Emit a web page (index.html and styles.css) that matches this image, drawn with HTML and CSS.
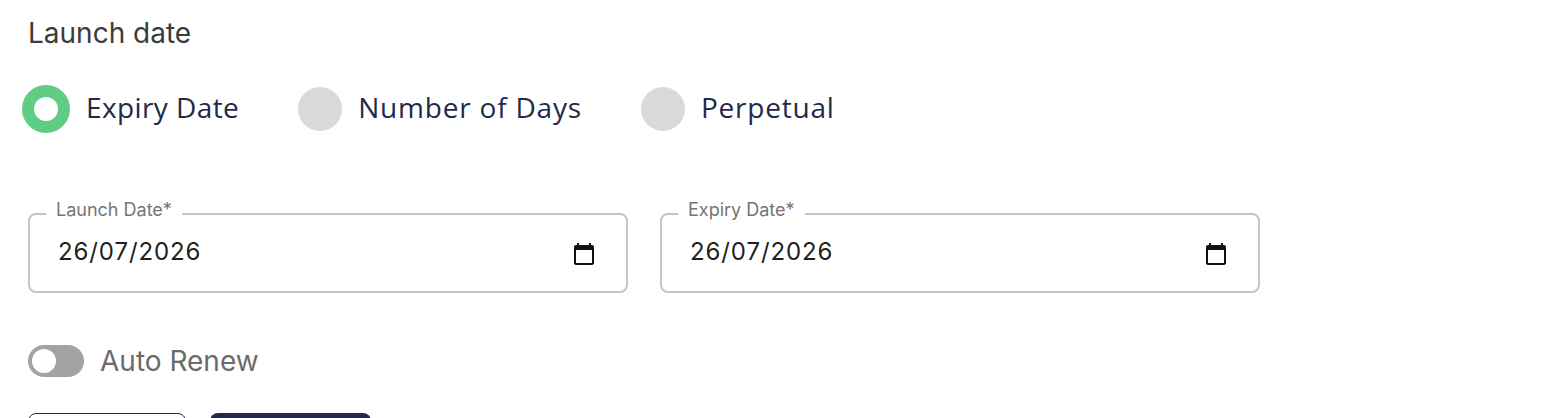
FILE: index.html
```html
<!DOCTYPE html>
<html lang="en">
<head>
<meta charset="utf-8">
<title>Launch date</title>
<link rel="stylesheet" href="styles.css">
</head>
<body>
<main class="page">
  <h2 class="title">Launch date</h2>
  <div class="radios">
    <label class="radio"><span class="dot dot-on"></span><span class="radio-text radio-text-tight">Expiry Date</span></label>
    <label class="radio"><span class="dot"></span><span class="radio-text">Number of Days</span></label>
    <label class="radio"><span class="dot"></span><span class="radio-text">Perpetual</span></label>
  </div>
  <div class="fields">
    <fieldset class="field">
      <legend class="legend">Launch Date*</legend>
      <span class="value">26/07/2026</span>
      <svg class="cal" viewBox="0 0 24 24"><path d="M20 3h-1V1h-2v2H7V1H5v2H4c-1.100 0-2 .9-2 2v16c0 1.100.9 2 2 2h16c1.100 0 2-.9 2-2V5c0-1.100-.9-2-2-2zm0 18H4V8h16v13z"/></svg>
    </fieldset>
    <fieldset class="field">
      <legend class="legend">Expiry Date*</legend>
      <span class="value">26/07/2026</span>
      <svg class="cal" viewBox="0 0 24 24"><path d="M20 3h-1V1h-2v2H7V1H5v2H4c-1.100 0-2 .9-2 2v16c0 1.100.9 2 2 2h16c1.100 0 2-.9 2-2V5c0-1.100-.9-2-2-2zm0 18H4V8h16v13z"/></svg>
    </fieldset>
  </div>
  <div class="renew">
    <span class="toggle"><span class="knob"></span></span>
    <span class="renew-text">Auto Renew</span>
  </div>
  <div class="actions">
    <button class="btn btn-outline" type="button"></button>
    <button class="btn btn-solid" type="button"></button>
  </div>
</main>
</body>
</html>
```
FILE: styles.css
```css
html, body { margin: 0; padding: 0; height: 100%; overflow: hidden; background: #fff; }
body { font-family: "Inter", "Liberation Sans", sans-serif; }
.page { padding: 16px 0 0 28px; }
.title { margin: 0; font-size: 28px; line-height: 34px; font-weight: 400; color: #3b3b3b; }
.radios { display: flex; align-items: center; margin: 35px 0 0 -6px; height: 48px; }
.radio { display: flex; align-items: center; gap: 16px; margin-right: 59px; }
.radio-text { font-family: "Open Sans", "Liberation Sans", sans-serif; font-size: 28px; letter-spacing: 0.8px; color: #23294a; padding-bottom: 4px; }
.radio-text-tight { letter-spacing: 0.4px; }
.dot { width: 44px; height: 44px; border-radius: 50%; background: #d9d9d9; box-sizing: border-box; }
.dot-on { width: 48px; height: 48px; background: #fff; border: 12px solid #5fcd83; }
.fields { display: flex; gap: 32px; margin-top: 67px; }
.field { width: 600px; height: 93px; box-sizing: border-box; margin: 0; padding: 0 30px 16px 28px; border: 2px solid #c4c4c4; border-radius: 8px; display: flex; align-items: center; justify-content: space-between; }
.legend { font-size: 18px; line-height: 20px; color: #757575; padding: 0 10px 8px; margin-left: -12px; }
.value { font-size: 24px; color: #1f1f1f; letter-spacing: 0.9px; }
.cal { width: 24px; height: 24px; fill: #111; margin-top: 4px; }
.renew { display: flex; align-items: center; gap: 16px; margin-top: 51px; }
.toggle { width: 56px; height: 32px; border-radius: 16px; background: #a3a3a3; display: flex; align-items: center; padding-left: 4px; box-sizing: border-box; }
.knob { width: 24px; height: 24px; border-radius: 50%; background: #fff; }
.renew-text { font-size: 28px; color: #6b6b6b; }
.actions { display: flex; gap: 24px; margin-top: 35px; }
.btn { height: 56px; border-radius: 8px; padding: 0; box-sizing: border-box; }
.btn-outline { width: 158px; background: #fff; border: 1px solid #23294a; }
.btn-solid { width: 161px; background: #23294a; border: 0; }
```
